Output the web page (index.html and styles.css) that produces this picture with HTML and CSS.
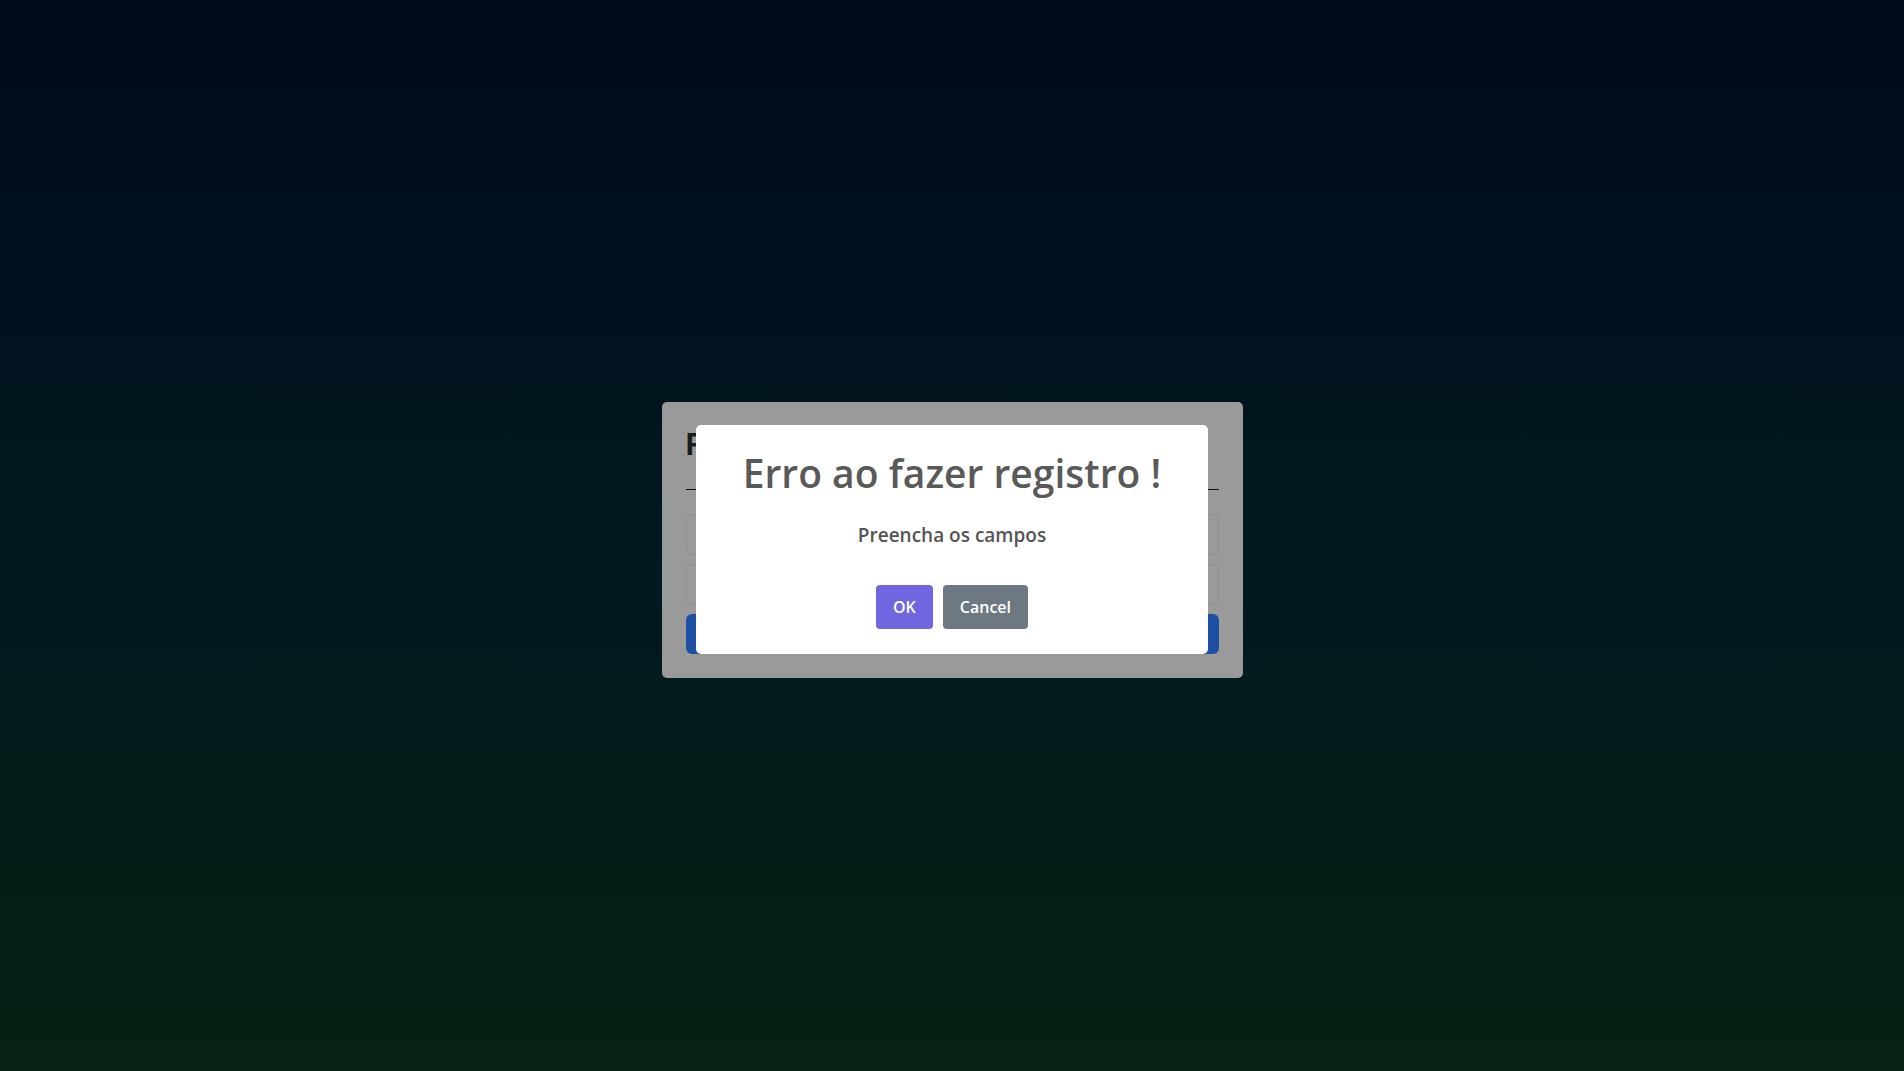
FILE: index.html
```html
<!DOCTYPE html>
<html lang="pt-BR">
<head>
<meta charset="utf-8">
<title>Registro</title>
<link rel="stylesheet" href="styles.css">
</head>
<body>
<main class="page">
  <form class="card">
    <h1 class="card-title">Registro</h1>
    <hr class="card-rule">
    <input class="field" type="text" placeholder="">
    <input class="field" type="password" placeholder="">
    <button class="submit" type="button">Registrar</button>
  </form>
</main>
<div class="backdrop">
  <div class="popup" role="dialog">
    <h2 class="popup-title">Erro ao fazer registro !</h2>
    <p class="popup-text">Preencha os campos</p>
    <div class="popup-actions">
      <button class="btn btn-ok" type="button">OK</button>
      <button class="btn btn-cancel" type="button">Cancel</button>
    </div>
  </div>
</div>
</body>
</html>
```
FILE: styles.css
```css
html, body {
  margin: 0;
  height: 100%;
}
body {
  background: linear-gradient(180deg, #000a1b 0%, #011820 50%, #052213 100%);
  font-family: "Open Sans", "Noto Sans", sans-serif;
}
.page {
  box-sizing: border-box;
  min-height: 100vh;
  padding-top: 9px;
  display: flex;
  align-items: center;
  justify-content: center;
}
.card {
  box-sizing: border-box;
  width: 581px;
  padding: 24px;
  background: #9a9a9a;
  border-radius: 5px;
  display: flex;
  flex-direction: column;
}
.card-title {
  margin: 0;
  font-family: "Liberation Sans", Arial, sans-serif;
  font-size: 31px;
  line-height: 37px;
  font-weight: 700;
  color: #1c1c1c;
}
.card-rule {
  margin: 26px 0 24px;
  border: 0;
  border-top: 1px solid #111;
  height: 0;
}
.field {
  box-sizing: border-box;
  height: 41px;
  margin: 0 0 9px;
  border: 1px solid #8f8f8f;
  border-radius: 6px;
  background: #9a9a9a;
}
.submit {
  height: 40px;
  border: 0;
  border-radius: 6px;
  background: #1d4fa3;
  color: #999;
  font-size: 16px;
}
.backdrop {
  position: fixed;
  inset: 0;
  box-sizing: border-box;
  padding-top: 8px;
  display: flex;
  align-items: center;
  justify-content: center;
}
.popup {
  box-sizing: border-box;
  width: 512px;
  padding: 0 0 25px;
  background: #fff;
  border-radius: 5px;
  text-align: center;
  color: #545454;
  display: flex;
  flex-direction: column;
  align-items: center;
}
.popup-title {
  margin: 0;
  padding: 25px 16px 0;
  font-size: 39px;
  line-height: 1.2;
  font-weight: 600;
  color: #595959;
}
.popup-text {
  margin: 25px 26px 0;
  font-size: 19px;
  line-height: 1.4;
  font-weight: 600;
  color: #545454;
}
.popup-actions {
  margin-top: 36px;
  display: flex;
  gap: 10px;
}
.btn {
  box-sizing: border-box;
  height: 44px;
  padding: 0 17px;
  border: 0;
  border-radius: 4px;
  color: #fff;
  font-family: "Open Sans", "Noto Sans", sans-serif;
  font-size: 16px;
  font-weight: 600;
}
.btn-ok {
  background: #7066e0;
}
.btn-cancel {
  background: #6e7881;
}
```
